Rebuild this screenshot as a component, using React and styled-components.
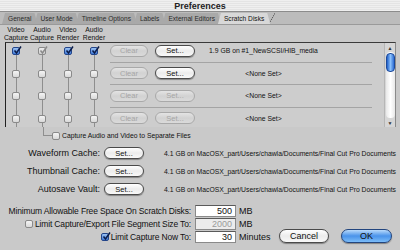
import React from 'react'
import styled, { createGlobalStyle } from 'styled-components'

const Global = createGlobalStyle`
  html, body { margin: 0; padding: 0; background: #c8c8c8; }
  * { box-sizing: border-box; }
`

const Window = styled.div`
  width: 400px;
  height: 250px;
  overflow: hidden;
  display: flex;
  flex-direction: column;
  background: #c9c9c9;
  font-family: "Liberation Sans", Arial, sans-serif;
  color: #111;
`

const TitleBar = styled.div`
  height: 12px;
  display: flex;
  align-items: center;
  justify-content: center;
  background: repeating-linear-gradient(#efefef 0, #efefef 1px, #e4e4e4 1px, #e4e4e4 2px);
  border-bottom: 1px solid #8c8c8c;
  font-size: 9px;
  font-weight: bold;
  color: #222;
`

const TabBar = styled.div`
  height: 13px;
  display: flex;
  align-items: flex-end;
  padding-left: 2px;
  background: #bcbcbc;
  border-bottom: 1px solid #9a9a9a;
`

const Tab = styled.div`
  height: 11px;
  padding: 0 6px;
  margin-right: -3px;
  display: flex;
  align-items: center;
  font-size: 6.6px;
  color: ${p => (p.$active ? '#111' : '#2a2a2a')};
  background: ${p => (p.$active ? '#d8d8d8' : '#a9a9a9')};
  clip-path: polygon(3px 0, calc(100% - 3px) 0, 100% 100%, 0 100%);
  position: relative;
  z-index: ${p => (p.$active ? 2 : 1)};
`

const TabEdge = styled.div`
  width: 6px;
  height: 11px;
  margin-left: 2px;
  background: linear-gradient(to bottom right, transparent 45%, #555 50%, transparent 55%);
`

const Body = styled.div`
  flex: 1;
  display: flex;
  flex-direction: column;
  padding: 0 4px 0 5px;
`

const HeaderRow = styled.div`
  height: 17px;
  display: grid;
  grid-template-columns: repeat(4, 20px);
  column-gap: 6px;
  padding-left: 1px;
  align-items: center;
`

const ColHead = styled.div`
  font-size: 6.8px;
  line-height: 7.5px;
  text-align: center;
  white-space: nowrap;
  display: flex;
  flex-direction: column;
  align-items: center;
`

const Table = styled.div`
  height: 85px;
  display: flex;
  background: #cdcdcd;
  border-top: 1px solid #3a3a3a;
  border-left: 1px solid #222;
  border-right: 1px solid #8a8a8a;
`

const Rows = styled.div`
  flex: 1;
  overflow: hidden;
`

const RowList = styled.div`
  margin-top: -3px;
`

const Row = styled.div`
  height: 22.5px;
  display: flex;
  align-items: stretch;
`

const CheckCells = styled.div`
  display: grid;
  grid-template-columns: repeat(4, 20px);
  column-gap: 6px;
`

const CheckCell = styled.div`
  position: relative;
  display: flex;
  align-items: center;
  justify-content: center;
  &::before {
    content: '';
    position: absolute;
    left: 50%;
    top: ${p => (p.$first ? '50%' : '0')};
    bottom: 0;
    border-left: 1px solid #8e8e8e;
  }
`

const RowRight = styled.div`
  flex: 1;
  display: flex;
  align-items: center;
  margin: 0 12px 0 6px;
  border-bottom: 1px solid #a4a4a4;
`

const Button = styled.div`
  width: ${p => p.$w || 40}px;
  height: ${p => p.$h || 12}px;
  flex: none;
  display: flex;
  align-items: center;
  justify-content: center;
  border-radius: 7px;
  font-size: ${p => p.$fs || 7.5}px;
  border: 1px solid ${p => (p.$disabled ? '#a9a9a9' : '#4a4a4a')};
  color: ${p => (p.$disabled ? '#a6a6a6' : '#111')};
  background: ${p =>
    p.$disabled
      ? 'linear-gradient(#e4e4e4, #d2d2d2 50%, #dadada)'
      : 'linear-gradient(#ffffff, #ececec 50%, #f8f8f8)'};
  box-shadow: ${p => (p.$disabled ? 'none' : '0 1px 1px rgba(0,0,0,0.35)')};
`

const OkButton = styled(Button)`
  border-color: #22457e;
  background: linear-gradient(#b9dafb, #4a93ea 50%, #7bbcf8);
`

const RowInfo = styled.div`
  flex: 1;
  font-size: 6.8px;
  text-align: center;
  padding-right: 40px;
  white-space: nowrap;
`

const ScrollBar = styled.div`
  width: 11px;
  display: flex;
  flex-direction: column;
  align-items: center;
  background: #d6d6d6;
  border-left: 1px solid #b6b6b6;
`

const Arrow = styled.div`
  height: 9px;
  display: flex;
  align-items: center;
  justify-content: center;
  font-size: 5px;
  color: #333;
`

const Track = styled.div`
  flex: 1;
  width: 9px;
  background: linear-gradient(to right, #e8e8e8, #ffffff 50%, #e8e8e8);
  border-radius: 4px;
  padding-top: 1px;
`

const Thumb = styled.div`
  height: 19px;
  border-radius: 4px;
  border: 1px solid #1d4a9a;
  background: linear-gradient(to right, #1f5fc9, #8ac0fb 50%, #2c6bd3);
`

const SepRow = styled.div`
  height: 17px;
  display: flex;
  align-items: center;
  font-size: 6.8px;
`

const Elbow = styled.div`
  width: 9px;
  height: 100%;
  margin-left: 38px;
  display: flex;
  flex-direction: column;
  span:first-child {
    height: 50%;
    border-left: 1px solid #8e8e8e;
    border-bottom: 1px solid #8e8e8e;
  }
`

const CacheRow = styled.div`
  height: 18px;
  display: flex;
  align-items: center;
`

const CacheLabel = styled.div`
  width: 100px;
  text-align: right;
  font-size: 9px;
  padding-right: 1px;
`

const CacheInfo = styled.div`
  margin-left: 20px;
  font-size: 6.8px;
  white-space: nowrap;
`

const Bottom = styled.div`
  flex: 1;
  margin-top: 6px;
  display: flex;
`

const LimitCol = styled.div`
  display: flex;
  flex-direction: column;
`

const LimitRow = styled.div`
  height: 13px;
  display: flex;
  align-items: center;
`

const LimitLabel = styled.div`
  width: 186px;
  display: flex;
  justify-content: flex-end;
  align-items: center;
  gap: 2px;
  font-size: 8.5px;
  letter-spacing: -0.15px;
  white-space: nowrap;
`

const Field = styled.div`
  width: 41px;
  height: 12px;
  margin-left: 4px;
  padding-right: 3px;
  display: flex;
  align-items: center;
  justify-content: flex-end;
  font-size: 9px;
  background: ${p => (p.$disabled ? '#ececec' : '#fff')};
  color: ${p => (p.$disabled ? '#9a9a9a' : '#111')};
  border: 1px solid #8a8a8a;
  border-top-color: #5a5a5a;
`

const Unit = styled.div`
  margin-left: 3px;
  font-size: 9px;
`

const Actions = styled.div`
  margin-left: auto;
  margin-bottom: 7px;
  align-self: flex-end;
  display: flex;
  gap: 12px;
  padding-right: 4px;
`

const Box = styled.div`
  width: 8px;
  height: 8px;
  flex: none;
  position: relative;
  z-index: 1;
  border-radius: 2px;
  border: 1px solid ${p => (p.$on && !p.$dim ? '#23458a' : '#8a8a8a')};
  background: ${p =>
    p.$on && !p.$dim
      ? 'linear-gradient(#9cc3f3, #3d78d8)'
      : p.$dim
      ? 'linear-gradient(#ececec, #cfcfcf)'
      : 'linear-gradient(#f4f4f4, #d9d9d9)'};
  svg { position: absolute; left: 0; top: -2px; }
`

const Check = ({ on, dim }) => (
  <Box $on={on} $dim={dim}>
    {on && (
      <svg width="9" height="9" viewBox="0 0 9 9">
        <path d="M1.5 4.5 L3.5 7 L8 0.5" fill="none" stroke={dim ? '#8a8a8a' : '#0c1d4a'} strokeWidth="1.5" />
      </svg>
    )}
  </Box>
)

const tabs = ['General', 'User Mode', 'Timeline Options', 'Labels', 'External Editors']

const disks = [
  { checks: [true, 'dim', true, true], set: true, info: '1.9 GB on #1_NewSCSI/HIB_media' },
  { checks: [false, false, false, false], set: true, info: '<None Set>' },
  { checks: [false, false, false, false], set: false, info: '<None Set>' },
  { checks: [false, false, false, false], set: false, info: '<None Set>' },
]

const caches = ['Waveform Cache:', 'Thumbnail Cache:', 'Autosave Vault:']
const path = '4.1 GB on MacOSX_part/Users/chawla/Documents/Final Cut Pro Documents'

export default function App() {
  return (
    <Window>
      <Global />
      <TitleBar>Preferences</TitleBar>
      <TabBar>
        {tabs.map(t => <Tab key={t}>{t}</Tab>)}
        <Tab $active>Scratch Disks</Tab>
        <TabEdge />
      </TabBar>
      <Body>
        <HeaderRow>
          <ColHead><span>Video</span><span>Capture</span></ColHead>
          <ColHead><span>Audio</span><span>Capture</span></ColHead>
          <ColHead><span>Video</span><span>Render</span></ColHead>
          <ColHead><span>Audio</span><span>Render</span></ColHead>
        </HeaderRow>
        <Table>
          <Rows>
            <RowList>
              {disks.map((d, i) => (
                <Row key={i}>
                  <CheckCells>
                    {d.checks.map((c, j) => (
                      <CheckCell key={j} $first={i === 0}>
                        <Check on={!!c} dim={c === 'dim'} />
                      </CheckCell>
                    ))}
                  </CheckCells>
                  <RowRight>
                    <Button $w={38} $disabled>Clear</Button>
                    <Button $w={40} $disabled={!d.set} style={{ marginLeft: 7 }}>Set...</Button>
                    <RowInfo>{d.info}</RowInfo>
                  </RowRight>
                </Row>
              ))}
            </RowList>
          </Rows>
          <ScrollBar>
            <Arrow>▲</Arrow>
            <Track><Thumb /></Track>
            <Arrow>▼</Arrow>
          </ScrollBar>
        </Table>
        <SepRow>
          <Elbow><span /><span /></Elbow>
          <Check />
          <span style={{ marginLeft: 2 }}>Capture Audio and Video to Separate Files</span>
        </SepRow>
        {caches.map(c => (
          <CacheRow key={c}>
            <CacheLabel>{c}</CacheLabel>
            <Button $w={40} style={{ marginLeft: 3 }}>Set...</Button>
            <CacheInfo>{path}</CacheInfo>
          </CacheRow>
        ))}
        <Bottom>
          <LimitCol>
            <LimitRow>
              <LimitLabel>Minimum Allowable Free Space On Scratch Disks:</LimitLabel>
              <Field>500</Field>
              <Unit>MB</Unit>
            </LimitRow>
            <LimitRow>
              <LimitLabel><Check />Limit Capture/Export File Segment Size To:</LimitLabel>
              <Field $disabled>2000</Field>
              <Unit>MB</Unit>
            </LimitRow>
            <LimitRow>
              <LimitLabel><Check on />Limit Capture Now To:</LimitLabel>
              <Field>30</Field>
              <Unit>Minutes</Unit>
            </LimitRow>
          </LimitCol>
          <Actions>
            <Button $w={50} $h={14} $fs={9}>Cancel</Button>
            <OkButton $w={51} $h={14} $fs={9}>OK</OkButton>
          </Actions>
        </Bottom>
      </Body>
    </Window>
  )
}
